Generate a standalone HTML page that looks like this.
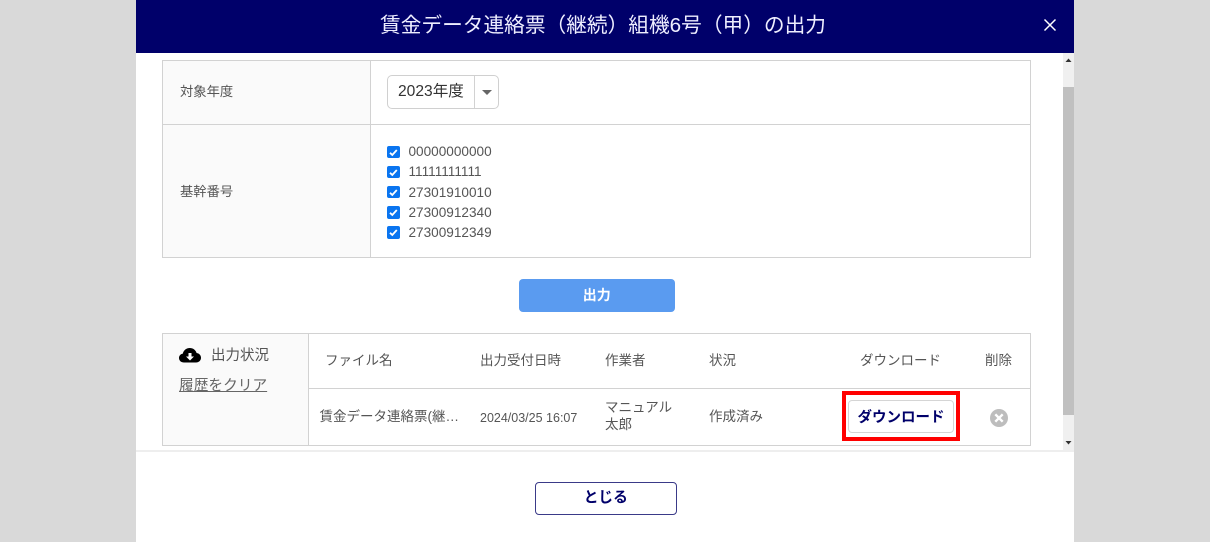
<!DOCTYPE html>
<html lang="ja"><head><meta charset="utf-8">
<style>
html,body{margin:0;padding:0;width:1210px;height:542px;overflow:hidden;background:#d9d9d9;font-family:"Liberation Sans","Noto Sans CJK JP",sans-serif;color:#555}
div,span,svg{position:absolute;white-space:nowrap;box-sizing:border-box}
.l{background:#d2d2d2}
.t{font-size:13.5px;line-height:18px;color:#555}
.n{font-size:13.6px;line-height:16px;color:#555;left:408.5px}
.c{left:387px;width:12.5px;height:12.5px;background:#0a75f0;border-radius:2px}
</style></head><body>
<div style="left:136px;top:0;width:938px;height:542px;background:#fff"></div>
<div style="left:136px;top:0;width:938px;height:53px;background:#00006a"></div>
<div style="left:380px;top:12px;font-size:20.7px;line-height:28px;color:#eef">賃金データ連絡票（継続）組機6号（甲）の出力</div>
<svg style="left:1043px;top:18px" width="14" height="14" viewBox="0 0 14 14"><path d="M1.5 1.5L12.5 12.5M12.5 1.5L1.5 12.5" stroke="#fff" stroke-width="1.5" fill="none"/></svg>

<div style="left:1063px;top:53px;width:11px;height:397px;background:#f0f0f0"></div>
<div style="left:1063px;top:87px;width:11px;height:328px;background:#c0c0c0"></div>
<svg style="left:1065px;top:58px" width="7" height="5" viewBox="0 0 7 5"><path d="M3.5 0.5L6.5 4H0.5Z" fill="#333"/></svg>
<svg style="left:1065px;top:440px" width="7" height="5" viewBox="0 0 7 5"><path d="M0.5 1H6.5L3.5 4.5Z" fill="#333"/></svg>

<div style="left:162px;top:60px;width:869px;height:198px;border:1px solid #d2d2d2"></div>
<div style="left:163px;top:61px;width:207px;height:196px;background:#fafafa"></div>
<div class="l" style="left:163px;top:124px;width:867px;height:1px"></div>
<div class="l" style="left:370px;top:61px;width:1px;height:196px"></div>
<div class="t" style="left:180px;top:83px;font-size:13.3px">対象年度</div>
<div class="t" style="left:180px;top:183px;font-size:13.3px">基幹番号</div>

<div style="left:387px;top:75px;width:112px;height:34px;border:1px solid #d0d0d0;border-radius:5px;background:#fff"></div>
<div class="l" style="left:474px;top:76px;width:1px;height:32px"></div>
<div style="left:398px;top:82px;font-size:15.6px;line-height:20px;color:#333">2023年度</div>
<svg style="left:481px;top:88.5px" width="12" height="7" viewBox="0 0 12 7"><path d="M1 1H11L6 6Z" fill="#666"/></svg>

<div class="c" style="top:145.5px"></div><svg style="left:387px;top:145.5px" width="13" height="13" viewBox="0 0 13 13"><path d="M3 6.8L5.3 9L9.8 4" stroke="#fff" stroke-width="1.8" fill="none"/></svg>
<div class="c" style="top:165.5px"></div><svg style="left:387px;top:165.5px" width="13" height="13" viewBox="0 0 13 13"><path d="M3 6.8L5.3 9L9.8 4" stroke="#fff" stroke-width="1.8" fill="none"/></svg>
<div class="c" style="top:185.5px"></div><svg style="left:387px;top:185.5px" width="13" height="13" viewBox="0 0 13 13"><path d="M3 6.8L5.3 9L9.8 4" stroke="#fff" stroke-width="1.8" fill="none"/></svg>
<div class="c" style="top:206px"></div><svg style="left:387px;top:206px" width="13" height="13" viewBox="0 0 13 13"><path d="M3 6.8L5.3 9L9.8 4" stroke="#fff" stroke-width="1.8" fill="none"/></svg>
<div class="c" style="top:226px"></div><svg style="left:387px;top:226px" width="13" height="13" viewBox="0 0 13 13"><path d="M3 6.8L5.3 9L9.8 4" stroke="#fff" stroke-width="1.8" fill="none"/></svg>
<div class="n" style="top:144px">00000000000</div>
<div class="n" style="top:164px">11111111111</div>
<div class="n" style="top:185px">27301910010</div>
<div class="n" style="top:205px">27300912340</div>
<div class="n" style="top:225px">27300912349</div>

<div style="left:518.5px;top:279px;width:156.5px;height:33px;background:#5a9bf0;border-radius:4px;color:#fff;font-weight:bold;font-size:14px;line-height:33px;text-align:center">出力</div>

<div style="left:162px;top:333px;width:869px;height:113px;border:1px solid #d2d2d2"></div>
<div style="left:163px;top:334px;width:145px;height:111px;background:#fafafa"></div>
<div class="l" style="left:308px;top:334px;width:1px;height:111px"></div>
<div class="l" style="left:309px;top:388px;width:721px;height:1px"></div>
<svg style="left:179px;top:347px" width="22" height="16" viewBox="0 0 22 16"><path d="M5 15.5C2 15.5 0 13.5 0 11C0 8.6 1.7 7 3.8 6.6C4.6 3.2 7.4 1 10.8 1C14 1 16.7 3 17.6 6C20.2 6.3 22 8.3 22 10.8C22 13.5 20 15.5 17 15.5Z" fill="#000"/><path d="M9.5 6H12.5V9.5H15L11 13.5L7 9.5H9.5Z" fill="#fff"/></svg>
<div style="left:211px;top:346px;font-size:14.5px;line-height:20px;color:#555">出力状況</div>
<div style="left:179px;top:376px;font-size:14.7px;line-height:20px;color:#666;text-decoration:underline">履歴をクリア</div>

<div class="t" style="left:325px;top:352px">ファイル名</div>
<div class="t" style="left:480px;top:352px">出力受付日時</div>
<div class="t" style="left:605px;top:352px">作業者</div>
<div class="t" style="left:709px;top:352px">状況</div>
<div class="t" style="left:860px;top:352px">ダウンロード</div>
<div class="t" style="left:985px;top:352px">削除</div>

<div class="t" style="left:319.5px;top:408px">賃金データ連絡票(継…</div>
<div style="left:480px;top:409px;font-size:12.5px;line-height:18px;color:#555">2024/03/25 16:07</div>
<div class="t" style="left:605px;top:399px;line-height:17px">マニュアル<br>太郎</div>
<div class="t" style="left:709px;top:408px">作成済み</div>

<div style="left:842px;top:391px;width:118px;height:50px;border:4px solid #f00"></div>
<div style="left:848px;top:400px;width:106px;height:33px;border:1px solid #d5d5d5;border-radius:4px;background:#fff;color:#00006a;font-weight:bold;font-size:14.5px;line-height:32px;text-align:center;padding-top:1px">ダウンロード</div>
<svg style="left:989px;top:408px" width="20" height="20" viewBox="0 0 20 20"><circle cx="10" cy="10" r="9" fill="#bdbdbd"/><path d="M6.3 6.3L13.7 13.7M13.7 6.3L6.3 13.7" stroke="#fff" stroke-width="2.4" fill="none"/></svg>

<div style="left:136px;top:450px;width:938px;height:2px;background:#eee"></div>
<div style="left:535px;top:481.5px;width:141.5px;height:33px;border:1px solid #3a3a88;border-radius:4px;background:#fff;color:#00006a;font-weight:bold;font-size:14.7px;line-height:31px;text-align:center">とじる</div>
</body></html>
